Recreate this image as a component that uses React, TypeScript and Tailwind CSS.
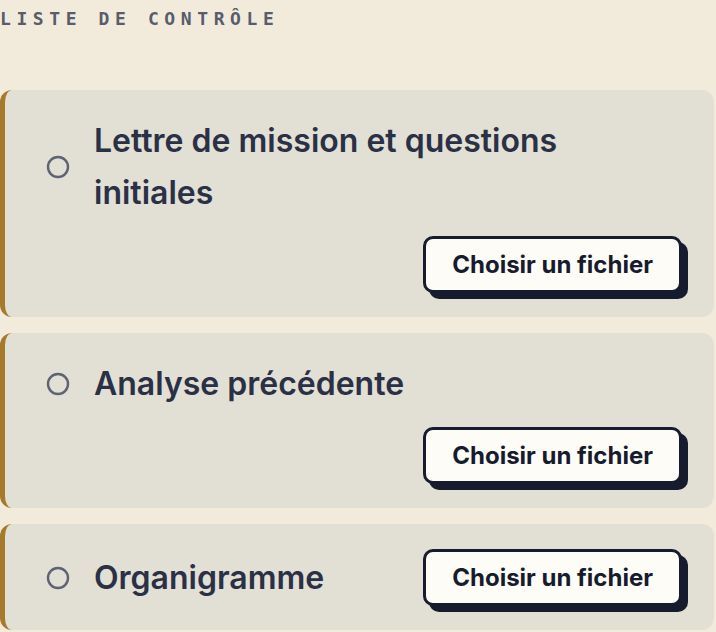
import { Circle } from "lucide-react";

const ITEMS = [
  "Lettre de mission et questions initiales",
  "Analyse précédente",
  "Organigramme",
];

function ChecklistItem({ label }: { label: string }) {
  return (
    <div className="w-[714px] rounded-xl border-l-[5px] border-[#a67a2c] bg-[#e2dfd4] pt-[25px] pb-6 pl-[41px] pr-8">
      <div className="flex flex-wrap items-center gap-x-6 gap-y-[17px]">
        <div className="flex flex-auto items-center gap-6">
          <Circle className="h-6 w-6 shrink-0 text-[#5d6274]" strokeWidth={2.4} />
          <span className="font-['Inter',sans-serif] text-[32px] font-semibold leading-[52px] text-[#2a3045]">
            {label}
          </span>
        </div>
        <button className="ml-auto h-[57px] rounded-[10px] border-[3px] border-[#161b2e] bg-[#fdfcf7] px-[26px] font-['Inter',sans-serif] text-[24px] font-bold text-[#161b2e] shadow-[6px_6px_0_#161b2e]">
          Choisir un fichier
        </button>
      </div>
    </div>
  );
}

export default function App() {
  return (
    <div className="min-h-screen bg-[#f2ebdc]">
      <h2 className="pt-[9px] font-['DejaVu_Sans_Mono',monospace] text-[18px] font-bold leading-5 tracking-[5.6px] text-[#585c6b]">
        LISTE DE CONTRÔLE
      </h2>
      <div className="mt-[61px] flex flex-col gap-4">
        {ITEMS.map((item) => (
          <ChecklistItem key={item} label={item} />
        ))}
      </div>
    </div>
  );
}
